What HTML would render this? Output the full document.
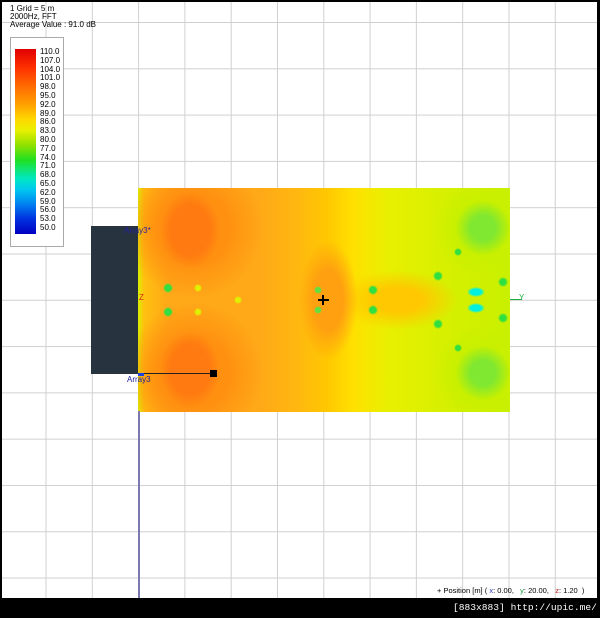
<!DOCTYPE html>
<html><head><style>
html,body{margin:0;height:618px}
body{background:#000;width:600px;overflow:hidden;font-family:"Liberation Sans",sans-serif;position:relative}
#c{position:absolute;left:2px;top:2px;width:595px;height:596px;background:#fff;overflow:hidden;
background-image:linear-gradient(90deg,#d0d0d0 1px,transparent 1px),linear-gradient(#d0d0d0 1px,transparent 1px);
background-size:46.3px 46.3px;background-position:43.5px 20px}
.t{position:absolute;font-size:8px;color:#000;line-height:8px;white-space:nowrap}
#hm{position:absolute;left:136px;top:186px;width:372px;height:224px;
background:
radial-gradient(ellipse 30px 38px at 52px 42px,#ff7a10 65%,transparent 100%),
radial-gradient(ellipse 30px 38px at 52px 182px,#ff7a10 65%,transparent 100%),
radial-gradient(circle 5px at 30px 100px,#30e040 60%,transparent),
radial-gradient(circle 5px at 30px 124px,#30e040 60%,transparent),
radial-gradient(circle 4px at 60px 100px,#e0f000 60%,transparent),
radial-gradient(circle 4px at 60px 124px,#e0f000 60%,transparent),
radial-gradient(circle 4px at 100px 112px,#e0f000 60%,transparent),
radial-gradient(circle 4px at 180px 102px,#60e040 60%,transparent),
radial-gradient(circle 4px at 180px 122px,#60e040 60%,transparent),
radial-gradient(circle 5px at 235px 122px,#30e040 60%,transparent),
radial-gradient(circle 5px at 235px 102px,#30e040 60%,transparent),
radial-gradient(ellipse 9px 5px at 338px 104px,#00f0e0 60%,transparent),
radial-gradient(ellipse 9px 5px at 338px 120px,#00f0e0 60%,transparent),
radial-gradient(circle 5px at 300px 88px,#30e040 60%,transparent),
radial-gradient(circle 5px at 300px 136px,#30e040 60%,transparent),
radial-gradient(circle 5px at 365px 94px,#30e040 60%,transparent),
radial-gradient(circle 5px at 365px 130px,#30e040 60%,transparent),
radial-gradient(circle 4px at 320px 64px,#30e040 60%,transparent),
radial-gradient(circle 4px at 320px 160px,#30e040 60%,transparent),
radial-gradient(ellipse 50px 50px at 345px 40px,#80e830 25%,#c8f000 55%,transparent 100%),
radial-gradient(ellipse 50px 50px at 345px 185px,#80e830 25%,#c8f000 55%,transparent 100%),
radial-gradient(ellipse 30px 60px at 190px 112px,#ffa010 50%,transparent 100%),
radial-gradient(ellipse 60px 30px at 260px 112px,#ffc800 40%,transparent 100%),
radial-gradient(ellipse 70px 70px at 55px 40px,#ff9010 50%,transparent 100%),
radial-gradient(ellipse 70px 70px at 55px 185px,#ff9010 50%,transparent 100%),
linear-gradient(90deg,#d8f000 0px,#ffc010 6px,#ffa818 30px,#ffa818 120px,#ffb810 160px,#ffc800 190px,#ffe000 215px,#e8f000 250px,#d8f000 300px,#c8f000 372px)}
</style></head><body>
<div id="c">
<div class="t" style="left:8px;top:3px">1 Grid = 5 m<br>2000Hz, FFT<br>Average Value : 91.0 dB</div>
<div style="position:absolute;left:8px;top:35px;width:52px;height:208px;background:#fff;border:1px solid #aaa"></div>
<div style="position:absolute;left:13px;top:47px;width:21px;height:185px;background:linear-gradient(#e00000,#ff3000 10%,#ff6a00 20%,#ffa000 30%,#ffd800 38%,#e8f000 44%,#90e000 52%,#20e020 60%,#00e8c0 70%,#00c8f0 76%,#0080f0 84%,#0030e0 92%,#0000c0)"></div>
<div class="t" style="left:38px;top:46px;line-height:8.8px">110.0<br>107.0<br>104.0<br>101.0<br>98.0<br>95.0<br>92.0<br>89.0<br>86.0<br>83.0<br>80.0<br>77.0<br>74.0<br>71.0<br>68.0<br>65.0<br>62.0<br>59.0<br>56.0<br>53.0<br>50.0</div>
<div id="hm"></div>
<div style="position:absolute;left:89px;top:224px;width:47px;height:148px;background:#283340"></div>
<div style="position:absolute;left:136px;top:409px;width:2px;height:190px;background:#7a7ab0"></div>
<div style="position:absolute;left:136px;top:371px;width:76px;height:1px;background:#222"></div>
<div style="position:absolute;left:208px;top:368px;width:7px;height:7px;background:#000"></div>
<div style="position:absolute;left:508px;top:297px;width:12px;height:1px;background:#20b040"></div>
<div class="t" style="left:517px;top:292px;color:#20b040">Y</div>
<div class="t" style="left:137px;top:292px;color:#e02020">Z</div>
<div class="t" style="left:122px;top:225px;color:#2020a0">Array3*</div>
<div class="t" style="left:125px;top:374px;color:#2020a0">Array3</div>
<div style="position:absolute;left:136px;top:371px;width:6px;height:3px;background:#2040e0"></div>
<div style="position:absolute;left:316px;top:297px;width:11px;height:2px;background:#000"></div>
<div style="position:absolute;left:320px;top:293px;width:2px;height:10px;background:#000"></div>
<div class="t" style="left:435px;top:585px;font-size:7.5px">+ Position [m] ( <span style="color:#3040c0">x</span>: 0.00, &nbsp; <span style="color:#20a040">y</span>: 20.00, &nbsp; <span style="color:#d02020">z</span>: 1.20 &nbsp;)</div>
</div>
<div style="position:absolute;left:453px;top:602px;color:#fff;font-family:'Liberation Mono',monospace;font-size:9.6px;white-space:nowrap">[883x883] http://upic.me/</div>
</body></html>
